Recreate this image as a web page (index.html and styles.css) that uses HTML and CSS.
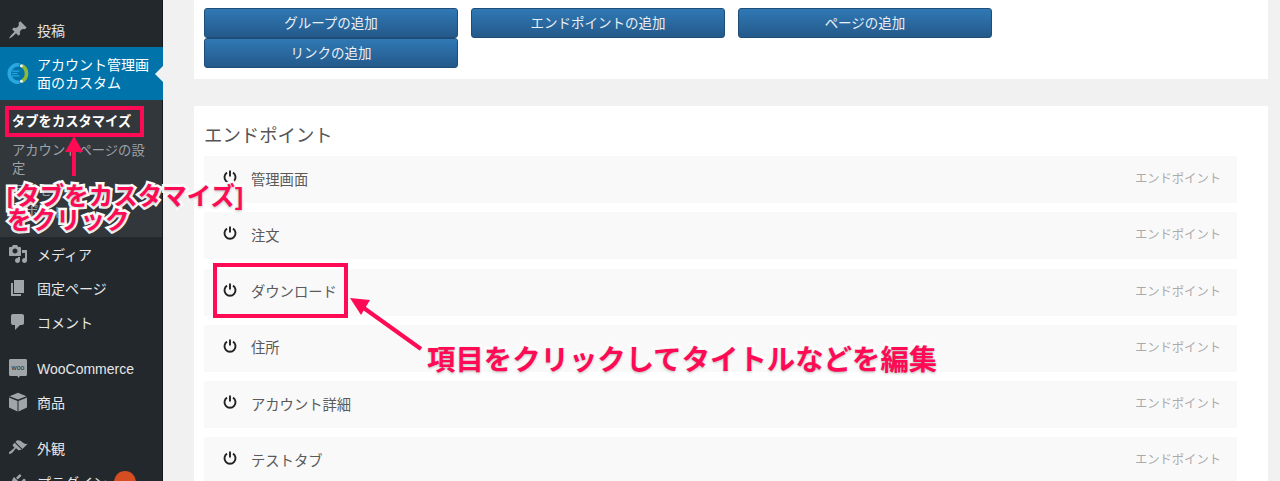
FILE: index.html
```html
<!DOCTYPE html>
<html lang="ja">
<head>
<meta charset="utf-8">
<title>エンドポイント</title>
<link rel="stylesheet" href="styles.css">
</head>
<body>
<div class="page">
  <aside class="sidebar">
    <a class="menu-item first"><svg class="dash" viewBox="0 0 20 20"><path d="M10.44 3.02l1.82-1.82 6.36 6.35-1.83 1.82c-1.05-.68-2.48-.57-3.41.36l-.75.75c-.92.93-1.04 2.35-.35 3.41l-1.83 1.82-2.41-2.41-2.8 2.79c-.42.42-3.38 2.71-3.8 2.29s1.86-3.39 2.28-3.81l2.79-2.79L4.1 9.36l1.83-1.82c1.05.69 2.48.57 3.4-.36l.75-.75c.93-.92 1.05-2.35.36-3.41z"/></svg><span>投稿</span></a>
    <a class="menu-item active">
      <svg class="logo" viewBox="0 0 24 22"><path d="M13 1.800A9.300 9.300 0 1 0 13 20.200" fill="none" stroke="#2aa7e0" stroke-width="3.800"/><path d="M15.500 2.800a9.300 9.300 0 0 1 0 16.400" fill="none" stroke="#8fb838" stroke-width="3.800"/><path d="M5 8.500h8M5 11h6M5 13.500h8" stroke="#2aa7e0" stroke-width="1.300"/><circle cx="15" cy="2.800" r="1.600" fill="#e8f4fa"/><circle cx="15" cy="19.200" r="1.600" fill="#e8f4fa"/></svg>
      <span>アカウント管理画面のカスタム</span>
    </a>
    <div class="submenu">
      <a class="sub-item current">タブをカスタマイズ</a>
      <a class="sub-item">アカウントページの設定</a>
      <a class="sub-item">ライセンス</a>
      <a class="sub-item">サポート</a>
    </div>
    <a class="menu-item"><svg class="dash" viewBox="0 0 20 20"><path d="M13 11V4c0-.55-.45-1-1-1h-1.670L9 1H5L3.670 3H2c-.55 0-1 .45-1 1v7c0 .55.45 1 1 1h10c.55 0 1-.45 1-1zM7 4.500c1.380 0 2.500 1.120 2.500 2.500S8.380 9.500 7 9.500 4.500 8.380 4.500 7 5.620 4.500 7 4.500zM14 6h5v10.500c0 1.380-1.120 2.500-2.500 2.500S14 17.880 14 16.500s1.120-2.500 2.500-2.500c.17 0 .34.02.5.05V9h-3V6zm-4 8.050V13h2v3.500c0 1.380-1.120 2.500-2.500 2.500S7 17.880 7 16.500 8.120 14 9.500 14c.17 0 .34.02.5.05z"/></svg><span>メディア</span></a>
    <a class="menu-item"><svg class="dash" viewBox="0 0 20 20"><path d="M6 15V2h10v13H6zm-1 1h8v2H3V5h2v11z"/></svg><span>固定ページ</span></a>
    <a class="menu-item"><svg class="dash" viewBox="0 0 20 20"><path d="M5 2h9c1.100 0 2 .9 2 2v7c0 1.100-.9 2-2 2h-2l-5 5v-5H5c-1.100 0-2-.9-2-2V4c0-1.100.9-2 2-2z"/></svg><span>コメント</span></a>
    <a class="menu-item group"><svg class="dash" viewBox="0 0 20 20"><path d="M2.500 1h15c.8 0 1.500.7 1.500 1.500v14c0 .8-.7 1.500-1.500 1.500H12l-1.800 2-.7-2H2.500C1.700 18 1 17.300 1 16.500v-14C1 1.700 1.700 1 2.500 1z"/><text x="10" y="12" class="woo-mark">woo</text></svg><span class="latin">WooCommerce</span></a>
    <a class="menu-item"><svg class="dash" viewBox="0 0 20 20"><path d="M10 .8l8.500 3.400L10 7.600 1.500 4.200zM1 5.500L9.500 8.900V19.500L1 15.500zM19 5.500V15.500L10.500 19.500V8.900z"/></svg><span>商品</span></a>
    <a class="menu-item group"><svg class="dash" viewBox="0 0 20 20"><path d="M14.480 11.060L7.410 3.990l1.500-1.500c.5-.56 2.300-.47 3.510.32 1.210.8 1.430 1.280 2.910 2.100 1.180.64 2.450 1.260 4.450.85zm-.71.71L6.700 4.700 4.930 6.470c-.39.39-.39 1.020 0 1.410l1.060 1.060c.39.39.39 1.030 0 1.420-.6.6-1.430 1.110-2.210 1.690-.35.26-.7.53-1.010.84C1.430 13.230.4 14.850 1.200 15.650c.8.8 2.420-.23 3.760-1.570.31-.31.58-.66.84-1.010.58-.78 1.090-1.610 1.690-2.210.39-.39 1.020-.39 1.410 0l1.060 1.060c.39.39 1.020.39 1.410 0z"/></svg><span>外観</span></a>
    <a class="menu-item"><svg class="dash" viewBox="0 0 20 20"><path d="M13.110 4.360L9.870 7.600 8 5.730l3.240-3.240c.35-.34 1.050-.2 1.560.32.52.51.66 1.210.31 1.550zm-8 1.770l.91-1.120 9.010 9.010-1.190.84c-.71.71-2.630 1.160-3.820 1.160H6.140L4.900 17.260c-.59.59-1.540.59-2.120 0-.59-.58-.59-1.530 0-2.120l1.240-1.240v-3.880c0-1.130.4-3.190 1.090-3.890zm7.260 3.970l3.240-3.240c.34-.35 1.040-.21 1.550.31.52.51.66 1.210.31 1.550l-3.240 3.250z"/></svg><span>プラグイン</span><i class="badge"></i></a>
  </aside>

  <main class="content">
    <section class="panel buttons-panel">
      <div class="button-grid">
        <button class="add-btn">グループの追加</button>
        <button class="add-btn">エンドポイントの追加</button>
        <button class="add-btn">ページの追加</button>
        <button class="add-btn">リンクの追加</button>
      </div>
    </section>
    <section class="panel list-panel">
      <h2 class="list-title">エンドポイント</h2>
      <ul class="rows">
        <li class="row"><svg class="power" viewBox="0 0 14 14"><path d="M4 2.600a5.500 5.500 0 1 0 6 0M7 .5v6"/></svg><span class="row-label">管理画面</span><span class="row-type">エンドポイント</span></li>
        <li class="row"><svg class="power" viewBox="0 0 14 14"><path d="M4 2.600a5.500 5.500 0 1 0 6 0M7 .5v6"/></svg><span class="row-label">注文</span><span class="row-type">エンドポイント</span></li>
        <li class="row"><svg class="power" viewBox="0 0 14 14"><path d="M4 2.600a5.500 5.500 0 1 0 6 0M7 .5v6"/></svg><span class="row-label">ダウンロード</span><span class="row-type">エンドポイント</span></li>
        <li class="row"><svg class="power" viewBox="0 0 14 14"><path d="M4 2.600a5.500 5.500 0 1 0 6 0M7 .5v6"/></svg><span class="row-label">住所</span><span class="row-type">エンドポイント</span></li>
        <li class="row"><svg class="power" viewBox="0 0 14 14"><path d="M4 2.600a5.500 5.500 0 1 0 6 0M7 .5v6"/></svg><span class="row-label">アカウント詳細</span><span class="row-type">エンドポイント</span></li>
        <li class="row"><svg class="power" viewBox="0 0 14 14"><path d="M4 2.600a5.500 5.500 0 1 0 6 0M7 .5v6"/></svg><span class="row-label">テストタブ</span><span class="row-type">エンドポイント</span></li>
      </ul>
    </section>
  </main>

  <div class="mark mark-tab"></div>
  <div class="mark mark-download"></div>
  <svg class="arrows" viewBox="0 0 1280 481">
    <path class="arrow-line" d="M74 176V150"/>
    <path class="arrow-head" d="M74 136l9 16h-18z"/>
    <path class="arrow-line" d="M421 349L361 306"/>
    <path class="arrow-head" d="M350 298l20 2-9 15z"/>
  </svg>
  <p class="note note-tab">[タブをカスタマイズ]<br>をクリック</p>
  <p class="note note-edit">項目をクリックしてタイトルなどを編集</p>
</div>
</body>
</html>
```
FILE: styles.css
```css
* { box-sizing: border-box; }
html, body { margin: 0; height: 481px; overflow: hidden; }
body { font-family: "Liberation Sans", "Noto Sans CJK JP", sans-serif; background: #f1f1f1; color: #444; }
.page { position: relative; display: flex; width: 1280px; height: 481px; overflow: hidden; }

.sidebar { flex: 0 0 163px; height: 481px; background: #23282d; padding-top: 13px; border-right: 1px solid #15181b; }
.menu-item { position: relative; display: flex; align-items: center; height: 34px; padding-left: 8px; font-size: 14px; color: #e6e6e6; }
.menu-item span { margin-left: 9px; white-space: nowrap; }
.menu-item span.latin { padding-top: 2px; }
.menu-item.group { margin-top: 12px; }
.dash { flex: 0 0 20px; width: 20px; height: 20px; fill: #a0a5aa; }
.woo-mark { font: 7px "Liberation Sans", sans-serif; fill: #23282d; text-anchor: middle; }
.menu-item.active { height: 53px; margin-right: -1px; padding-left: 7px; background: #0073aa; color: #fff; line-height: 18px; }
.menu-item.active span { width: 116px; margin-left: 7px; white-space: normal; }
.menu-item.active::after { content: ""; position: absolute; right: 0; top: 19px; border: 8px solid transparent; border-right-color: #f1f1f1; border-left-width: 0; }
.logo { flex: 0 0 23px; width: 23px; height: 21px; }
.submenu { height: 137px; padding-top: 13px; background: #32373c; }
.sub-item { display: block; padding: 0 12px; font-size: 13.300px; line-height: 18px; color: #9ea3a8; margin-bottom: 11px; }
.sub-item.current { color: #fff; font-weight: 700; }
.sub-item:nth-child(2) { margin-bottom: 4px; }
.sub-item:nth-child(3) { margin-bottom: 4px; }
.badge { display: block; width: 22px; height: 22px; margin-left: 7px; border-radius: 50%; background: #d54e21; }

.content { flex: 1; min-width: 0; padding: 0 12px 0 31px; }
.panel { background: #fff; }
.buttons-panel { height: 79px; padding: 8px 10px 0; }
.button-grid { display: grid; grid-template-columns: repeat(3, 254px); grid-auto-rows: 30px; column-gap: 13px; }
.add-btn { font: 13.500px/26px "Liberation Sans", "Noto Sans CJK JP", sans-serif; color: #eaf0f6; border: 1px solid #1d4d78; border-radius: 3px; background: linear-gradient(#3079b5, #24598a); padding: 2px 0 0; }
.list-panel { margin-top: 27px; padding: 0 31px 0 10px; height: 400px; }
.list-title { margin: 0; height: 50px; padding-top: 16px; font-size: 18.400px; line-height: 28px; font-weight: 400; color: #555; }
.rows { list-style: none; margin: 0; padding: 0; display: flex; flex-direction: column; gap: 9.300px; }
.row { display: flex; align-items: center; height: 47px; padding: 0 16px 0 19px; background: #f9f9f9; }
.power { flex: 0 0 14px; width: 14px; height: 14px; margin-bottom: 5px; fill: none; stroke: #222; stroke-width: 1.900; }
.row-label { margin-left: 14px; font-size: 14.300px; color: #5a5a5a; margin-bottom: 3px; }
.row-type { margin-left: auto; font-size: 12.300px; color: #aaa; margin-bottom: 3px; }

.mark { position: absolute; border: 4px solid #ff0a54; }
.mark-tab { left: 5px; top: 106px; width: 139px; height: 31px; }
.mark-download { left: 213px; top: 263px; width: 135px; height: 55px; }
.arrows { position: absolute; left: 0; top: 0; width: 1280px; height: 481px; }
.arrow-line { fill: none; stroke: #ff0a54; stroke-width: 4; }
.arrow-head { fill: #ff0a54; }
.note { position: absolute; margin: 0; font-weight: 700; color: #ff0a54; -webkit-text-stroke: 5px #fff; paint-order: stroke fill; white-space: nowrap; text-shadow: 0 1px 3px rgba(0,0,0,.3); }
.note-tab { left: 7px; top: 185px; font-size: 24.500px; line-height: 24px; }
.note-edit { left: 427px; top: 340px; font-size: 28.400px; line-height: 40px; }
```
